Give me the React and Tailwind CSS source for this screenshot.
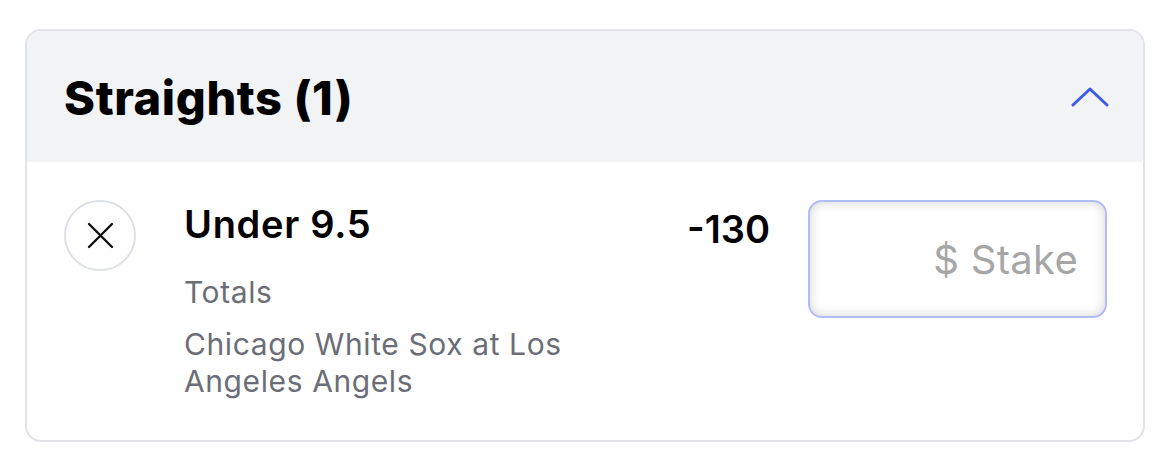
import React from 'react';

function ChevronUp() {
  return (
    <svg width="38" height="20" viewBox="0 0 38 20" fill="none">
      <path d="M2 18 L19 2 L36 18" stroke="#3b5be6" strokeWidth="3" strokeLinecap="round" strokeLinejoin="round" />
    </svg>
  );
}

function CloseIcon() {
  return (
    <svg width="27" height="27" viewBox="0 0 27 27" fill="none">
      <path d="M2 2 L25 25 M25 2 L2 25" stroke="#111" strokeWidth="2.4" strokeLinecap="round" />
    </svg>
  );
}

export default function App() {
  return (
    <div className="w-[1170px] h-[458px] bg-white pt-[29px] px-[25px]" style={{ fontFamily: 'Inter, "Liberation Sans", sans-serif' }}>
      <div className="border-2 border-[#e1e3e7] rounded-[16px] overflow-hidden">
        <div className="bg-[#f2f3f5] h-[131px] flex items-center justify-between pl-[37px] pr-[34px]">
          <h2 className="text-[47px] leading-[56px] font-extrabold text-black tracking-[0.6px] pt-[3px]">Straights (1)</h2>
          <ChevronUp />
        </div>
        <div className="flex items-start pl-[37px] pr-[36px] pt-[38px] pb-[40px]">
          <button className="w-[72px] h-[71px] shrink-0 rounded-full border-2 border-[#dde0e4] flex items-center justify-center">
            <CloseIcon />
          </button>
          <div className="ml-[48px] flex-1">
            <div className="text-[38px] leading-[46px] font-semibold text-black mt-[1px] tracking-[0.7px]">Under 9.5</div>
            <div className="text-[30px] leading-[37px] text-[#6b6e76] mt-[27px] tracking-[0.6px]">Totals</div>
            <div className="text-[30px] leading-[37px] text-[#6b6e76] mt-[15px] w-[420px] tracking-[0.6px]">Chicago White Sox at Los Angeles Angels</div>
          </div>
          <div className="text-[38px] leading-[46px] font-semibold text-black mt-[6px] mr-[38px]">-130</div>
          <div className="w-[299px] h-[118px] rounded-[14px] border-2 border-[#b0bcf6] shadow-[inset_0_0_12px_rgba(0,0,0,0.17)] flex items-center justify-end pr-[27px]">
            <span className="text-[40px] text-[#a6a6a6] pt-[2px] tracking-[0.3px]">$ Stake</span>
          </div>
        </div>
      </div>
    </div>
  );
}
